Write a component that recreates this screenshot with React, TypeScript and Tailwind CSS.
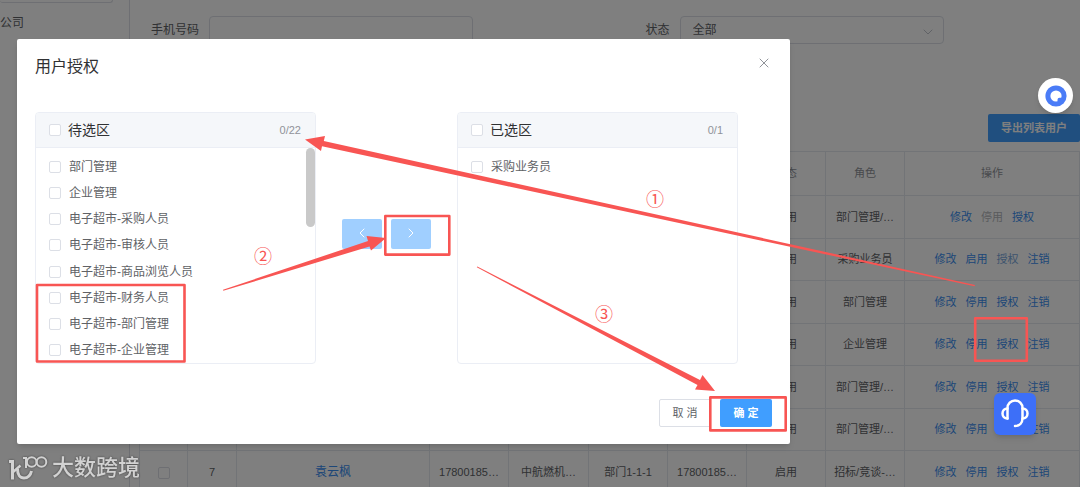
import clsx from 'clsx'
import { ChevronDown, ChevronLeft, ChevronRight, X } from 'lucide-react'

const sourceRoles = [
  '部门管理',
  '企业管理',
  '电子超市-采购人员',
  '电子超市-审核人员',
  '电子超市-商品浏览人员',
  '电子超市-财务人员',
  '电子超市-部门管理',
  '电子超市-企业管理'
]
const targetRoles = ['采购业务员']

interface Action {
  label: string
  tone?: 'muted' | 'soft'
}

interface UserRow {
  index?: string
  name?: string
  account?: string
  company?: string
  department?: string
  phone?: string
  status: string
  role: string
  actions: Action[]
}

const defaultActions: Action[] = [{ label: '修改' }, { label: '停用' }, { label: '授权' }, { label: '注销' }]

const rows: UserRow[] = [
  {
    status: '启用',
    role: '部门管理/…',
    actions: [{ label: '修改' }, { label: '停用', tone: 'muted' }, { label: '授权' }]
  },
  {
    status: '停用',
    role: '采购业务员',
    actions: [{ label: '修改' }, { label: '启用' }, { label: '授权', tone: 'soft' }, { label: '注销' }]
  },
  { status: '启用', role: '部门管理', actions: defaultActions },
  { status: '启用', role: '企业管理', actions: defaultActions },
  { status: '启用', role: '部门管理/…', actions: defaultActions },
  { status: '启用', role: '部门管理/…', actions: defaultActions },
  {
    index: '7',
    name: '袁云枫',
    account: '17800185…',
    company: '中航燃机…',
    department: '部门1-1-1',
    phone: '17800185…',
    status: '启用',
    role: '招标/竞谈-…',
    actions: defaultActions
  }
]

const checkbox = 'size-3 flex-none appearance-none rounded-xs border border-[#dcdfe6] bg-white checked:bg-[#409eff]'

function Filters() {
  return (
    <form className="grid grid-cols-2 pt-4 text-xs text-[#606266]">
      <div className="flex h-7 items-center">
        <label htmlFor="phone" className="w-[70px] flex-none pr-2.5 text-right">手机号码</label>
        <input id="phone" className="h-7 w-[264px] rounded border border-[#dcdfe6] px-3" />
      </div>
      <div className="flex h-7 items-center">
        <label htmlFor="status" className="w-[70px] flex-none pr-2.5 text-right">状态</label>
        <div className="relative w-[264px]">
          <select id="status" className="h-7 w-full appearance-none rounded border border-[#dcdfe6] px-3">
            <option>全部</option>
          </select>
          <ChevronDown className="pointer-events-none absolute top-2 right-2 size-4 text-[#c0c4cc]" strokeWidth={1.5} />
        </div>
      </div>
    </form>
  )
}

function ActionLinks({ actions }: { actions: Action[] }) {
  return (
    <div className="flex justify-center gap-[9px]">
      {actions.map(({ label, tone }) => (
        <a
          key={label}
          href="#"
          className={clsx(
            !tone && 'text-[#3a8ef0]',
            tone === 'soft' && 'text-[#7aa8dc]',
            tone === 'muted' && 'text-[#b4b6ba]'
          )}
        >
          {label}
        </a>
      ))}
    </div>
  )
}

function UserTable() {
  const cell = 'border border-[#e4e9ee] p-0'
  return (
    <table className="mt-[9px] h-[343px] w-full table-fixed border-collapse text-center text-[11px] text-[#606266]">
      <colgroup>
        <col className="w-12" />
        <col className="w-[49px]" />
        <col />
        <col className="w-[79px]" />
        <col className="w-[80px]" />
        <col className="w-[79px]" />
        <col className="w-[79px]" />
        <col className="w-[79px]" />
        <col className="w-[79px]" />
        <col className="w-[175px]" />
      </colgroup>
      <thead className="text-[#909399]">
        <tr>
          {['', '', '', '', '', '', '', '状态', '角色', '操作'].map((title, i) => (
            <th key={i} className={clsx(cell, 'h-11 font-normal')}>{title}</th>
          ))}
        </tr>
      </thead>
      <tbody>
        {rows.map((row, i) => (
          <tr key={i}>
            <td className={cell}>
              <input type="checkbox" aria-label={`选择 ${i + 1}`} className={clsx(checkbox, 'align-middle')} />
            </td>
            <td className={cell}>{row.index}</td>
            <td className={cell}>
              {row.name && <a href="#" className="text-xs text-[#3a8ef0]">{row.name}</a>}
            </td>
            <td className={cell}>{row.account}</td>
            <td className={cell}>{row.company}</td>
            <td className={cell}>{row.department}</td>
            <td className={cell}>{row.phone}</td>
            <td className={cell}>{row.status}</td>
            <td className={cell}>{row.role}</td>
            <td className={cell}><ActionLinks actions={row.actions} /></td>
          </tr>
        ))}
      </tbody>
    </table>
  )
}

function TransferPanel({ id, title, count, items, scrollable }: {
  id: string
  title: string
  count: string
  items: string[]
  scrollable?: boolean
}) {
  return (
    <section className="flex h-[252px] w-[281px] flex-none flex-col overflow-hidden rounded border border-[#ebeef5]">
      <header className="flex h-[35px] flex-none items-center border-b border-[#ebeef5] bg-[#f5f7fa] pr-3.5 pl-[13px]">
        <input id={`${id}-all`} type="checkbox" className={checkbox} />
        <label htmlFor={`${id}-all`} className="ml-[7px] flex-1 text-sm leading-5 text-[#303133]">{title}</label>
        <span className="text-[11px] text-[#909399]">{count}</span>
      </header>
      <div className="flex flex-1">
        <ul className="grid flex-1 grid-rows-8 pt-1.5 pl-[13px] text-xs text-[#606266]">
          {items.map((item, i) => (
            <li key={item} className="flex items-center">
              <input id={`${id}-${i}`} type="checkbox" className={checkbox} />
              <label htmlFor={`${id}-${i}`} className="pl-2 leading-5">{item}</label>
            </li>
          ))}
        </ul>
        {scrollable && <div className="h-[79px] w-[9px] rounded-full bg-[#c9c9c9]" />}
      </div>
    </section>
  )
}

function AuthorizeDialog() {
  const move = 'flex h-[30px] w-10 items-center justify-center rounded-xs bg-[#a0cfff] pb-0.5 text-white'
  return (
    <div
      role="dialog"
      aria-labelledby="dialog-title"
      className="absolute top-[39px] right-[290px] left-[17px] rounded-xs bg-white px-[18px] pb-[17px] shadow-md"
    >
      <div className="flex items-start justify-between pt-4">
        <h2 id="dialog-title" className="text-base leading-6 text-[#303133]">用户授权</h2>
        <button aria-label="关闭" className="text-[#909399]"><X className="size-4" strokeWidth={1.5} /></button>
      </div>
      <div className="mt-[33px] flex items-center">
        <TransferPanel id="source" title="待选区" count="0/22" items={sourceRoles} scrollable />
        <div className="flex gap-[9px] px-[26px] pb-2">
          <button aria-label="移除" className={move}><ChevronLeft className="size-4" strokeWidth={1.5} /></button>
          <button aria-label="添加" className={move}><ChevronRight className="size-4" strokeWidth={1.5} /></button>
        </div>
        <TransferPanel id="target" title="已选区" count="0/1" items={targetRoles} />
      </div>
      <div className="mt-[35px] flex justify-end gap-[9px] text-[11px]">
        <button className="h-7 w-[52px] rounded-xs border border-[#dcdfe6] text-[#606266]">取 消</button>
        <button className="h-7 w-[52px] rounded-xs bg-[#409eff] font-bold text-white">确 定</button>
      </div>
    </div>
  )
}

// Red step markers laid over the dialog and the table
function Annotations() {
  return (
    <svg className="pointer-events-none absolute top-0 left-0" width="1080" height="487" viewBox="0 0 1080 487">
      <g fill="none" stroke="#f85553" strokeWidth="2.6" strokeLinejoin="round">
        <rect x="37" y="285" width="147.5" height="76.5" />
        <rect x="385.3" y="216" width="64" height="38.6" />
        <rect x="710.3" y="397.4" width="75.4" height="33" />
        <rect x="975.2" y="318.2" width="51.6" height="42.6" />
      </g>
      <g fill="#f85553">
        <path d="M975 285 L974.5 286.300 L322 146.300 L321 151 L305 139.500 L325 136 L323.800 141 Z" />
        <path d="M223 289.800 L223.300 290.800 L369.500 246.500 L371 250.500 L386 238 L366.500 236 L368 241 Z" />
        <path d="M477.300 266.500 L476.800 267.300 L697.500 385 L695 389.500 L715 391 L702.500 375 L700 380 Z" />
      </g>
      <g fill="#f85553" fontFamily="'Noto Sans CJK SC', sans-serif" fontSize="18" textAnchor="middle">
        <text x="263" y="263">②</text>
        <text x="655" y="206">①</text>
        <text x="604" y="321">③</text>
      </g>
    </svg>
  )
}

function FloatingTools() {
  return (
    <>
      <button
        aria-label="助手"
        className="absolute top-[78px] right-[7px] flex size-[35px] items-center justify-center rounded-full bg-white shadow-md"
      >
        <svg width="22" height="22" viewBox="0 0 22 22">
          <circle cx="11" cy="11" r="10.6" fill="#4a7cf7" />
          <circle cx="11" cy="11" r="5.6" fill="#fff" />
          <path d="M17 12.700h-2.500a2 2 0 0 0-2 2V17H17Z" fill="#4a7cf7" />
        </svg>
      </button>
      <button
        aria-label="在线客服"
        className="absolute top-[393px] right-[44px] flex size-[42px] items-center justify-center rounded-md bg-[#3d6ff8] shadow-md"
      >
        <svg width="42" height="42" viewBox="0 0 42 42" fill="none" stroke="#fff" strokeWidth="2.5" strokeLinecap="round" strokeLinejoin="round">
          <path d="M13.500 25.500V15a7.500 7.500 0 0 1 15 0v10c0 5-3 8-7.500 8" />
          <path d="M13.500 15.500c-3 0-5 2.200-5 5s2 5 5 5M28.500 15.500c3 0 5 2.200 5 5s-2 5-5 5" />
        </svg>
      </button>
    </>
  )
}

function Watermark() {
  return (
    <div className="absolute bottom-[5px] left-[9px] flex items-center gap-1 text-[#d2d2d2] drop-shadow-[0_0_1px_#444]">
      <svg width="39" height="26" viewBox="0 0 39 26" fill="none" stroke="currentColor" strokeWidth="3">
        <path d="M0 6.500h3.500V24.500" />
        <path d="M3.500 17.500 L11.500 10.500" strokeWidth="2.5" />
        <path d="M8.500 14c0 5.500 2.500 9 6.500 9s6.500-2.500 7.500-7" />
        <path d="M14 3h3v10" strokeWidth="2" />
        <circle cx="22.700" cy="7" r="4.800" strokeWidth="2" />
        <circle cx="32.500" cy="7" r="4.800" strokeWidth="2" />
      </svg>
      <span className="text-[22px] leading-7 font-medium">大数跨境</span>
    </div>
  )
}

export default function App() {
  return (
    <div className="relative h-screen overflow-hidden bg-white font-['Liberation_Sans','Noto_Sans_CJK_SC',sans-serif]">
      <div className="flex h-full">
        <aside className="w-[130px] flex-none border-r border-[#dcdfe6] text-xs text-[#606266]">
          <div className="mr-4 h-[3px] rounded-b border-r border-b border-[#dcdfe6]" />
          <p className="pt-2.5 leading-5">公司</p>
        </aside>
        <main className="min-w-0 flex-1 pl-[9px]">
          <Filters />
          <div className="mt-[70px] flex justify-end">
            <button className="h-7 rounded-xs bg-[#409eff] px-[13px] text-[11px] font-bold text-white">导出列表用户</button>
          </div>
          <UserTable />
        </main>
      </div>
      <div className="absolute inset-0 bg-black/50" />
      <AuthorizeDialog />
      <Annotations />
      <FloatingTools />
      <Watermark />
    </div>
  )
}
